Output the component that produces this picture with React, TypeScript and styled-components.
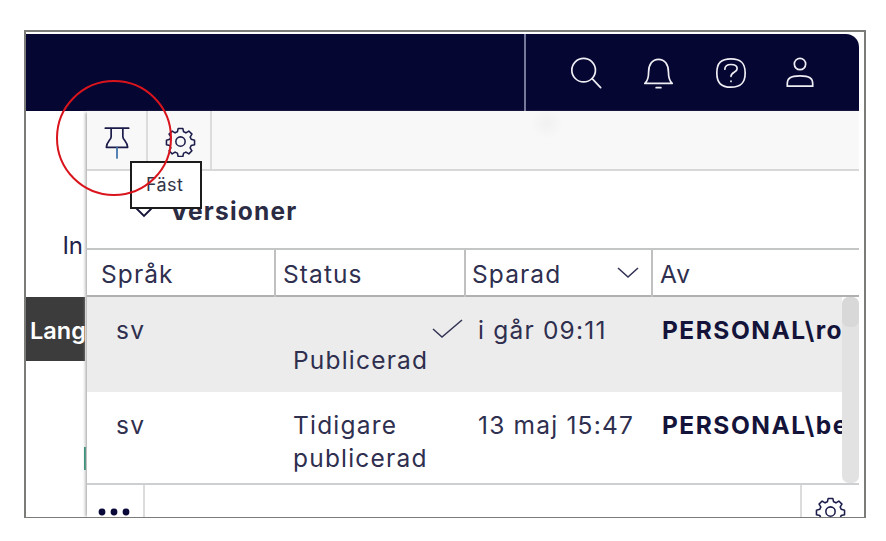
import React from "react";
import styled, { createGlobalStyle } from "styled-components";

const Global = createGlobalStyle`
  html, body { margin: 0; padding: 0; background: #fff; }
  #root { width: 886px; height: 541px; overflow: hidden; }
  * { box-sizing: border-box; }
`;
const Page = styled.div`
  width: 886px; height: 541px; padding: 30px 20px 23px 24px;
  font-family: Inter, "Liberation Sans", sans-serif; color: #14143a;
`;
const Frame = styled.div`
  position: relative; width: 842px; height: 488px; border: 2px solid #7b7b78; border-bottom-width: 1.5px;
  padding-top: 2px; overflow: hidden; background: #fff; display: flex; flex-direction: column;
`;
const Nav = styled.header`
  width: 833px; height: 77px; flex: none; background: #060632; border-top-right-radius: 13px;
  padding-left: 498px; display: flex;
`;
const NavRule = styled.div`width: 2px; background: #77779a;`;
const NavIcons = styled.div`display: flex; padding: 22px 0 0 43px;`;
const NavIcon = styled.svg<{ $gap: number }>`
  width: 34px; height: 34px; margin-right: ${p => p.$gap}px; fill: none; stroke: #eeeef4; stroke-width: 1.8; stroke-linecap: round; stroke-linejoin: round;
`;
const Main = styled.div`flex: 1; display: flex; min-height: 0; width: 838px;`;
const SideStrip = styled.aside`width: 59px; flex: none; display: flex; flex-direction: column; position: relative;`;
const SideLabel = styled.div`
  height: 186px; padding-top: 121px; text-align: right; padding-right: 2px; font-size: 24px; line-height: 28px; color: #22224a; overflow: hidden; white-space: nowrap;
`;
const SideDark = styled.div`
  height: 64px; background: #3c3c3c; color: #fff; font-size: 23.5px; font-weight: 600; line-height: 67px; padding-left: 4px; overflow: hidden; white-space: nowrap;
`;
const GreenTick = styled.div`
  position: absolute; right: -1px; top: 336px; width: 2px; height: 23px; background: #1b8a6b;
`;
const Panel = styled.section`
  width: 777px; flex: none; display: flex; flex-direction: column; position: relative;
  margin-left: 2px; box-shadow: -3px 0 3px -0.5px #a8a8a8; background: #fff; border-right: 5px solid #fff; min-height: 0;
`;
const Toolbar = styled.div`
  height: 60px; flex: none; display: flex; border-bottom: 2px solid #d8d8d8;
  background: radial-gradient(circle 16px at 460px 12px, #f1f1f1, #f8f8f8) #f8f8f8;
`;
const ToolButton = styled.div<{ $w: number; $drop: number }>`
  width: ${p => p.$w}px; border-right: 2px solid #dcdcdc; display: flex; align-items: center; justify-content: center; padding-top: ${p => p.$drop}px;
`;
const Glyph = styled.svg`
  width: 34px; height: 34px; fill: none; stroke: #1c1c4a; stroke-width: 1.6; stroke-linecap: round; stroke-linejoin: round;
`;
const ToolGear = styled(Glyph)`width: 31px; height: 31px; margin-left: 2px;`;
const Section = styled.div`
  height: 79px; flex: none; display: flex; align-items: center; gap: 13px; padding: 0 0 0 44px; border-bottom: 2px solid #c4c6c6;
`;
const SectionTitle = styled.h2`margin: 0; font-size: 24.5px; font-weight: 700; letter-spacing: 1.2px; color: #2b2b44; line-height: 1; padding-top: 3px;`;
const Chevron = styled.svg`width: 26px; height: 14px; fill: none; stroke: #14143a; stroke-width: 1.8; margin-top: 3px;`;
const HeadRow = styled.div`
  height: 47px; flex: none; display: grid; grid-template-columns: 189px 190px 187px 1fr; border-bottom: 2px solid #b0b0b0;
`;
const HeadCell = styled.div<{ $pad: number }>`
  padding-left: ${p => p.$pad}px; font-size: 24.5px; line-height: 49px; letter-spacing: 1.1px; color: #2f2f4f; border-right: 2px solid #c0c0c0; display: flex; justify-content: space-between; padding-right: 12px;
  &:last-child { border-right: 0; }
`;
const SortMark = styled.svg`width: 22px; height: 12px; margin-top: 17px; fill: none; stroke: #333355; stroke-width: 1.6;`;
const Body = styled.div`height: 186px; flex: none; display: flex;`;
const Rows = styled.div`width: 755px; flex: none; overflow: hidden;`;
const Row = styled.div<{ $h: number; $on?: boolean }>`
  height: ${p => p.$h}px; display: grid; grid-template-columns: 189px 190px 187px 1fr; background: ${p => (p.$on ? "#ececec" : "#fff")};
  font-size: 24.5px; line-height: 33px; letter-spacing: 1.2px; color: #2f2f4f; padding-top: 17px;
`;
const Cell = styled.div<{ $pad: number }>`padding-left: ${p => p.$pad}px; white-space: nowrap; overflow: hidden;`;
const NameCell = styled(Cell)`font-weight: 700; letter-spacing: 1.5px; color: #14143a;`;
const StatusLine = styled.div`display: flex; justify-content: flex-end; height: 30px; padding: 5px 3px 0 0;`;
const Check = styled.svg`width: 31px; height: 20px; fill: none; stroke: #333355; stroke-width: 1.5;`;
const Track = styled.div`width: 17px; flex: none; background: #e2e2e2; border-radius: 7px;`;
const Thumb = styled.div`height: 30px; background: #d8d8d8; border-radius: 7px;`;
const Footer = styled.div`
  flex: 1; min-height: 0; display: flex; border-top: 2px solid #ccd0d0; justify-content: space-between;
`;
const FootCell = styled.div<{ $w: number; $left?: boolean }>`
  width: ${p => p.$w}px; overflow: hidden; display: flex; justify-content: center;
  ${p => (p.$left ? "border-right: 2px solid #dcdcdc;" : "border-left: 2px solid #dcdcdc;")}
`;
const DotsSvg = styled.svg`width: 34px; height: 8px; margin-top: 23px; margin-right: 2px; fill: #0a0a3a;`;
const FootGear = styled(Glyph)`width: 31px; height: 31px; margin-top: 11px; flex: none;`;
const Ring = styled.div`
  position: absolute; left: 30px; top: 48px; width: 116px; height: 116px; border-radius: 50%; border: 2px solid #d9141c; z-index: 3;
`;
const Tip = styled.div`
  position: absolute; left: 104px; top: 129px; width: 72px; height: 48px; border: 2px solid #1c1c1c; background: #fff; z-index: 2;
  font-size: 18px; line-height: 20px; padding: 12px 0 0 14px; color: #333348; letter-spacing: 0.4px;
`;

const gear = "M13.600 2.500h4.800l.8 3.500c.9.300 1.700.6 2.400 1.100l3-1.900 3.200 3.200-1.900 3c.5.700.8 1.500 1.100 2.400l3.500.8v4.800l-3.500.8c-.3.900-.6 1.700-1.100 2.400l1.900 3-3.200 3.200-3-1.900c-.7.5-1.500.8-2.400 1.100l-.8 3.500h-4.800l-.8-3.500c-.9-.3-1.700-.6-2.400-1.100l-3 1.900-3.200-3.200 1.900-3c-.5-.7-.8-1.500-1.100-2.400l-3.500-.8v-4.800l3.500-.8c.3-.9.6-1.700 1.100-2.400l-1.900-3 3.200-3.200 3 1.900c.7-.5 1.500-.8 2.400-1.100z";

const Gear = ({ as: C = Glyph }: { as?: any }) => (
  <C viewBox="0 0 32 32">
    <path d={gear} />
    <circle cx="16" cy="16" r="4.800" />
  </C>
);

export default function App() {
  return (
    <Page>
      <Global />
      <Frame>
        <Nav>
          <NavRule />
          <NavIcons>
            <NavIcon $gap={39} viewBox="0 0 36 36">
              <circle cx="15.500" cy="15" r="12.500" />
              <path d="M24.500 24l9 9.500" />
            </NavIcon>
            <NavIcon $gap={38} viewBox="0 0 36 36">
              <path d="M3 29c3.500-3 4-6 4-12C7 9 11 3.500 17.500 3.500S28 9 28 17c0 6 .5 9 4 12z" />
              <path d="M15 33.500h5" />
            </NavIcon>
            <NavIcon $gap={35} viewBox="0 0 36 36">
              <path d="M18 3c10.500 0 15 4.500 15 15s-4.500 15-15 15S3 28.500 3 18 7.500 3 18 3z" />
              <path d="M11.500 14c0-3.500 2.500-5 6.500-5s6.500 1.500 6.500 4.500c0 4-6.500 3.500-6.500 8" />
              <path d="M18 26.500v.5" />
            </NavIcon>
            <NavIcon $gap={0} viewBox="0 0 36 36">
              <circle cx="18" cy="8.500" r="6" />
              <path d="M4.500 32c0-6 .5-7 3-9 2-1.500 4.500-2 10.500-2s8.500.5 10.500 2c2.500 2 3 3 3 9z" />
            </NavIcon>
          </NavIcons>
        </Nav>
        <Main>
          <SideStrip>
            <SideLabel>In</SideLabel>
            <SideDark>Lang</SideDark>
            <GreenTick />
          </SideStrip>
          <Panel>
            <Toolbar>
              <ToolButton $w={61} $drop={3}>
                <Glyph viewBox="0 0 32 32">
                  <path d="M5 3h22" />
                  <path d="M10.500 3.500v7.500c0 3-4.500 5-4.500 10h20c0-5-4.500-7-4.500-10V3.500" />
                  <path d="M16 21v10" stroke="#3a6ea8" />
                </Glyph>
              </ToolButton>
              <ToolButton $w={64} $drop={2}>
                <Gear as={ToolGear} />
              </ToolButton>
            </Toolbar>
            <Section>
              <Chevron viewBox="0 0 26 14"><path d="M2 1l11 11L24 1" /></Chevron>
              <SectionTitle>Versioner</SectionTitle>
            </Section>
            <HeadRow>
              <HeadCell $pad={14}>Språk</HeadCell>
              <HeadCell $pad={7}>Status</HeadCell>
              <HeadCell $pad={6}>
                Sparad
                <SortMark viewBox="0 0 22 12"><path d="M1 1l10 9 10-9" /></SortMark>
              </HeadCell>
              <HeadCell $pad={7}>Av</HeadCell>
            </HeadRow>
            <Body>
              <Rows>
                <Row $h={95} $on>
                  <Cell $pad={29}>sv</Cell>
                  <Cell $pad={17}>
                    <StatusLine>
                      <Check viewBox="0 0 31 20"><path d="M1 10l9 8L30 1" /></Check>
                    </StatusLine>
                    Publicerad
                  </Cell>
                  <Cell $pad={12}>i går 09:11</Cell>
                  <NameCell $pad={9}>PERSONAL\rolf</NameCell>
                </Row>
                <Row $h={91}>
                  <Cell $pad={29}>sv</Cell>
                  <Cell $pad={17}>Tidigare<br />publicerad</Cell>
                  <Cell $pad={12}>13 maj 15:47</Cell>
                  <NameCell $pad={9}>PERSONAL\bengt</NameCell>
                </Row>
              </Rows>
              <Track><Thumb /></Track>
            </Body>
            <Footer>
              <FootCell $w={58} $left>
                <DotsSvg viewBox="0 0 34 8">
                  <circle cx="5" cy="4" r="3.400" />
                  <circle cx="17" cy="4" r="3.400" />
                  <circle cx="29" cy="4" r="3.400" />
                </DotsSvg>
              </FootCell>
              <FootCell $w={59}>
                <Gear as={FootGear} />
              </FootCell>
            </Footer>
          </Panel>
        </Main>
        <Ring />
        <Tip>Fäst</Tip>
      </Frame>
    </Page>
  );
}
